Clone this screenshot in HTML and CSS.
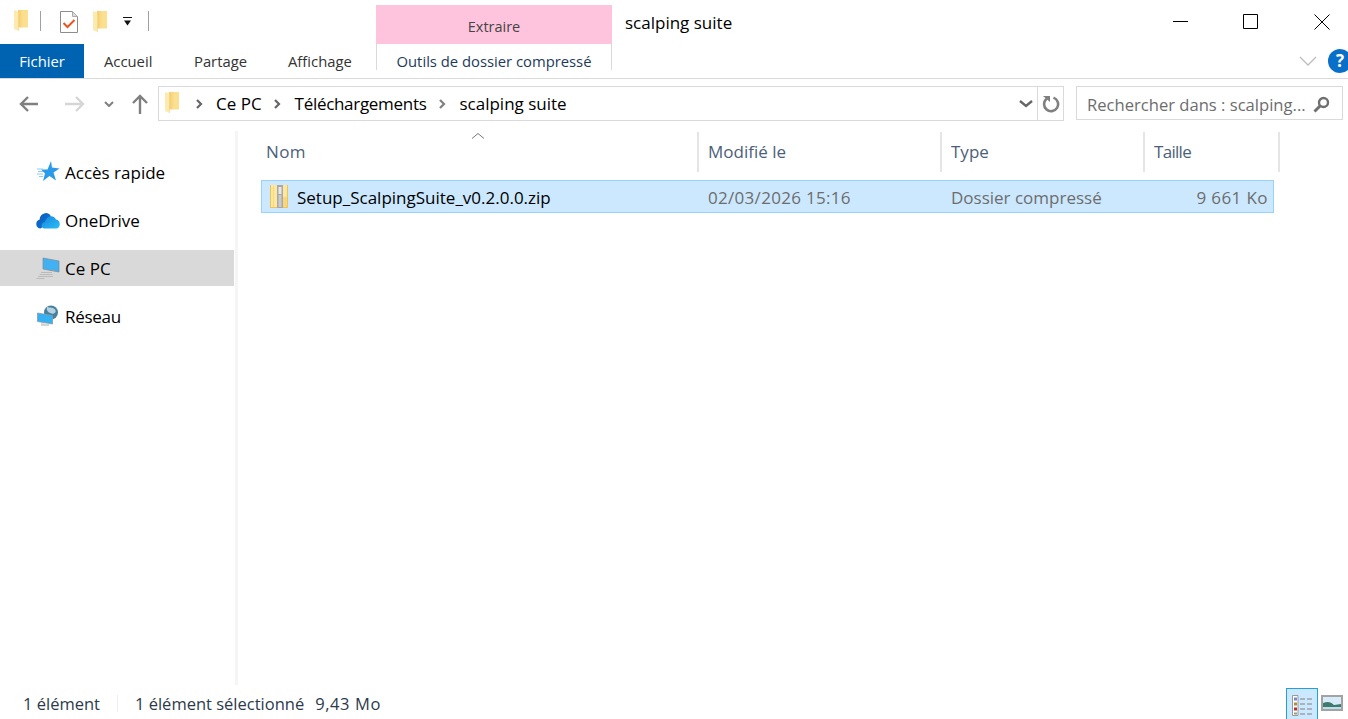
FILE: index.html
```html
<!DOCTYPE html>
<html lang="fr">
<head>
<meta charset="utf-8">
<title>scalping suite</title>
<link rel="stylesheet" href="styles.css">
</head>
<body>
<svg class="defs" width="0" height="0">
  <defs>
    <linearGradient id="fold" x1="0" y1="0" x2="1" y2="0"><stop offset="0" stop-color="#f2cc6c"/><stop offset=".5" stop-color="#fbdf90"/><stop offset="1" stop-color="#fbe08f"/></linearGradient>
    <linearGradient id="odr" x1="0" y1="0" x2="1" y2="1"><stop offset="0" stop-color="#0c59bd"/><stop offset="1" stop-color="#0f78d4"/></linearGradient>
    <linearGradient id="odl" x1="0" y1="0" x2="1" y2="1"><stop offset="0" stop-color="#1484dc"/><stop offset="1" stop-color="#2cc0f6"/></linearGradient>
    <symbol id="folder" viewBox="0 0 14 21">
      <path d="M4 0h10v17.500H4z" fill="url(#fold)"/>
      <path d="M0 0l4.500 1.500V21L0 19z" fill="#fdeab0"/>
      <path d="M4.500 1.500V21" stroke="#f4cf72" stroke-width=".5"/>
    </symbol>
    <symbol id="zip" viewBox="0 0 18 23">
      <path d="M0 0h18v23H0z" fill="#fee79f"/>
      <path d="M0 0h1v23H0zM1 22h17v1H1zM17 0h1v23h-1z" fill="#efc25c"/>
      <path d="M3 1h1v21H3z" fill="#fad87c"/>
      <path d="M13 12h4v10h-4z" fill="#f8d67a"/>
      <path d="M7 0h6v23H7z" fill="#a8a8a8"/>
      <path d="M8.500 2h3v7h-3z" fill="#e8e8e8"/>
      <path d="M8.500 11h3M8.500 13h3M8.500 15h3M8.500 17h3M8.500 19h3M8.500 21h3" stroke="#eee"/>
    </symbol>
  </defs>
</svg>
<div class="window">
  <header class="titlebar">
    <div class="qat">
      <svg class="qi q1" width="14" height="21"><use href="#folder"/></svg>
      <span class="qsep"></span>
      <svg class="qi q2" width="18" height="22" viewBox="0 0 18 22"><path d="M.5.500h12l5 5v16H.5z" fill="#fff" stroke="#8d8d8d"/><path d="M12.500.5v5h5z" fill="#ddd" stroke="#aaa"/><path d="M3.500 12l4 4 7-7" fill="none" stroke="#e9541f" stroke-width="2"/></svg>
      <svg class="qi q3" width="14" height="21"><use href="#folder"/></svg>
      <svg class="qi q4" width="9" height="9" viewBox="0 0 9 9"><path d="M0 .5h9" stroke="#111"/><path d="M1 3.500h7L4.500 8.500z" fill="#111"/></svg>
      <span class="qsep q5"></span>
    </div>
    <div class="context">Extraire</div>
    <div class="wintitle">scalping suite</div>
    <div class="controls">
      <svg width="16" height="16" viewBox="0 0 16 16"><path d="M1 7.500h15" stroke="#000"/></svg>
      <svg width="16" height="16" viewBox="0 0 16 16"><path d="M.5.500h14v14H.5z" fill="none" stroke="#000"/></svg>
      <svg width="16" height="16" viewBox="0 0 16 16"><path d="M.5.500l15 15M15.500.500l-15 15" stroke="#000" fill="none"/></svg>
    </div>
  </header>

  <nav class="ribbon">
    <div class="tab file">Fichier</div>
    <div class="tab t1">Accueil</div>
    <div class="tab t2">Partage</div>
    <div class="tab t3">Affichage</div>
    <div class="tab tools">Outils de dossier compressé</div>
    <div class="ribbon-right">
      <svg width="18" height="10" viewBox="0 0 18 10"><path d="M1 1l8 8 8-8" fill="none" stroke="#bdbdbd" stroke-width="1.300"/></svg>
      <span class="help">?</span>
    </div>
  </nav>

  <div class="addressrow">
    <div class="navbtns">
      <svg width="19" height="16" viewBox="0 0 19 16"><path d="M19 8H2M9 1L2 8l7 7" fill="none" stroke="#808080" stroke-width="2.400"/></svg>
      <svg class="fwd" width="20" height="16" viewBox="0 0 20 16"><path d="M0 8h18M11 1l7 7-7 7" fill="none" stroke="#d6d6d6" stroke-width="2.400"/></svg>
      <svg class="rec" width="10" height="6" viewBox="0 0 10 6"><path d="M1 1l4 4 4-4" fill="none" stroke="#808080" stroke-width="2"/></svg>
      <svg class="up" width="16" height="20" viewBox="0 0 16 20"><path d="M8 20V2M1 9l7-7 7 7" fill="none" stroke="#808080" stroke-width="2.400"/></svg>
    </div>
    <div class="address">
      <svg class="addrfolder" width="14" height="21"><use href="#folder"/></svg>
      <svg class="crumb c0" width="7" height="10" viewBox="0 0 7 10"><path d="M1 1l4 4-4 4" fill="none" stroke="#666" stroke-width="2.200"/></svg>
      <span>Ce PC</span>
      <svg class="crumb c1" width="7" height="10" viewBox="0 0 7 10"><path d="M1 1l4 4-4 4" fill="none" stroke="#666" stroke-width="2.200"/></svg>
      <span class="dl">Téléchargements</span>
      <svg class="crumb c2" width="7" height="10" viewBox="0 0 7 10"><path d="M1 1l4 4-4 4" fill="none" stroke="#808080" stroke-width="2.200"/></svg>
      <span>scalping suite</span>
      <div class="addr-end">
        <svg class="drop" width="14" height="8" viewBox="0 0 14 8"><path d="M1 1l6 5 6-5" fill="none" stroke="#666" stroke-width="2.400"/></svg>
        <span class="refresh"><svg width="18" height="18" viewBox="0 0 18 18"><path d="M11.500 2.600A7 7 0 1 1 5 3.500" fill="none" stroke="#808080" stroke-width="2.600"/><path d="M1 1h7v6z" fill="#808080"/></svg></span>
      </div>
    </div>
    <div class="search">
      <span>Rechercher dans : scalping...</span>
      <svg width="17" height="17" viewBox="0 0 17 17"><circle cx="10.500" cy="6.500" r="4.500" fill="none" stroke="#707070" stroke-width="2.400"/><path d="M7 10l-5.500 5.500" stroke="#707070" stroke-width="3"/></svg>
    </div>
  </div>

  <main class="body">
    <aside class="sidebar">
      <div class="navitem">
        <svg width="24" height="22" viewBox="0 0 24 22"><path d="M15 0l1 6.500 7.500 1-6 4 2.500 8-6.500-4.500-6.500 5 2-7.500-4-4h6.500z" fill="#2b9be8"/><path d="M1 8h6M2 10.500h5M1 13h6M3 15.500h4" stroke="#8ccbf3"/></svg>
        <span>Accès rapide</span>
      </div>
      <div class="navitem">
        <svg width="24" height="17" viewBox="0 0 24 17"><path d="M4.500 16.500a4.500 4.500 0 0 1-1-8.800A7.500 7.500 0 0 1 10 1c2 0 3.500 1 4.500 2.500V10z" fill="url(#odr)"/><path d="M8.500 16.500c-4 0-4-6 .5-6.500 1.500-6 8-8 11-2.500 5 .5 5 9 0 9z" fill="url(#odl)"/></svg>
        <span>OneDrive</span>
      </div>
      <div class="navitem active">
        <svg width="24" height="22" viewBox="0 0 24 22"><path d="M7 1l16 3v11L7 12z" fill="#41b1f2" stroke="#7a8a96" stroke-width=".7"/><path d="M5 15.500h11M3.500 17.500h13M2 19.500h15M.5 21.500h8" stroke="#b4b4b4" stroke-width=".8"/><path d="M14 13.500h5" stroke="#999"/></svg>
        <span>Ce PC</span>
      </div>
      <div class="navitem">
        <svg width="24" height="23" viewBox="0 0 24 23"><circle cx="15" cy="7.500" r="7" fill="#46809f"/><path d="M11 2c3 1 6 0 8 2.500s-1 5-3.500 4-5.500-2-4.500-6.500z" fill="#b6d2e2"/><path d="M1.500 8l15 2.500v8.500l-15-2.500z" fill="#35b0f0" stroke="#8a9aa6" stroke-width=".8"/><path d="M5 18v3h8v-2z" fill="#d5d5d5"/></svg>
        <span class="net">Réseau</span>
      </div>
    </aside>
    <section class="files">
      <svg class="sort" width="14" height="7" viewBox="0 0 14 7"><path d="M1 6.500l6-5 6 5" fill="none" stroke="#777"/></svg>
      <div class="headers">
        <div class="h h-name">Nom</div>
        <div class="h">Modifié le</div>
        <div class="h">Type</div>
        <div class="h size-h">Taille</div>
      </div>
      <div class="row">
        <div class="cell name"><svg width="18" height="23"><use href="#zip"/></svg><span>Setup_ScalpingSuite_v0.2.0.0.zip</span></div>
        <div class="cell date">02/03/2026 15:16</div>
        <div class="cell">Dossier compressé</div>
        <div class="cell size">9 661 Ko</div>
      </div>
    </section>
  </main>

  <footer class="status">
    <span class="s1">1 élément</span>
    <span class="ssep"></span>
    <span class="s2">1 élément sélectionné</span>
    <span class="s3">9,43 Mo</span>
    <div class="views">
      <span class="view on"><svg width="20" height="22" viewBox="0 0 20 22"><path d="M.5.500h5.500v20H.5z" fill="#fff" stroke="#999"/><path d="M2 2.500h3v3H2z" fill="#7c8ac0"/><path d="M2 7.500h3v3H2z" fill="#a89040"/><path d="M2 12.500h3v3H2z" fill="#b83030"/><path d="M2 17.500h3v2H2z" fill="#90a080"/><path d="M8 4h5M15 4h5M8 9h5M15 9h5M8 14h5M15 14h5M8 19h5M15 19h5" stroke="#808080"/></svg></span>
      <svg class="large" width="22" height="16" viewBox="0 0 22 16"><path d="M1 1h20v14H1z" fill="#d7ecf8" stroke="#a3a3a3" stroke-width="2"/><path d="M2 8c5-2 8-1 11 2l7-1v3H10l-8 1z" fill="#3f7a6c"/><path d="M2 12h18v2H2z" fill="#bcdff0"/></svg>
    </div>
  </footer>
</div>
</body>
</html>
```
FILE: styles.css
```css
* { box-sizing: border-box; }
html, body { margin: 0; height: 100%; background: #fff; overflow: hidden; }
body { font-family: "Open Sans", "Noto Sans", "Liberation Sans", sans-serif; font-size: 17px; color: #000; }
.defs { position: absolute; }
.window { width: 1348px; height: 719px; display: flex; flex-direction: column; }

.titlebar { height: 44px; display: flex; align-items: flex-start; flex: none; }
.qat { width: 376px; height: 44px; display: flex; align-items: center; padding: 0 0 1px 14px; }
.qi { flex: none; }
.qsep { width: 1px; height: 20px; background: #a0a0a0; margin: 0 0 2px 12px; }
.q1 { margin-bottom: 2px; }
.q2 { margin-left: 19px; }
.q3 { margin-left: 15px; }
.q4 { margin-left: 16px; }
.q5 { margin-left: 16px; }
.context { width: 236px; height: 39px; margin-top: 5px; background: #fec4de; color: #444; font-size: 14.500px; display: flex; align-items: center; justify-content: center; padding-top: 3px; }
.wintitle { margin-left: 13px; height: 44px; line-height: 46px; }
.controls { margin-left: auto; display: flex; height: 44px; align-items: center; gap: 55px; padding: 0 18px 0 0; }
.controls svg { flex: none; }

.ribbon { height: 35px; flex: none; display: flex; border-bottom: 1px solid #dadada; font-size: 14.800px; color: #333; }
.tab { height: 34px; line-height: 34px; flex: none; }
.file { width: 84px; background: #0063b1; color: #fff; text-align: center; }
.t1 { margin-left: 20px; width: 90px; }
.t2 { width: 94px; }
.t3 { width: 88px; }
.tools { width: 236px; height: 26px; line-height: 34px; border: 1px solid #dadada; border-width: 0 1px; color: #1c3a5c; text-align: center; }
.ribbon-right { margin-left: auto; display: flex; align-items: center; gap: 11px; height: 34px; margin-right: -4px; }
.help { width: 24px; height: 24px; border-radius: 50%; background: #0a6fc8; color: #fff; font-weight: 700; font-size: 17px; line-height: 24px; text-align: center; }

.addressrow { height: 52px; flex: none; display: flex; align-items: flex-start; padding: 7px 5px 0 0; }
.navbtns { width: 158px; height: 35px; display: flex; align-items: center; padding-left: 19px; flex: none; }
.fwd { margin-left: 27px; }
.rec { margin-left: 19px; }
.up { margin-left: 18px; }
.address { width: 906px; height: 35px; border: 1px solid #dadada; display: flex; align-items: center; flex: none; }
.address span { flex: none; }
.addrfolder { margin: 0 0 3px 6px; flex: none; }
.crumb { margin: 0 13px 0 12px; flex: none; }
.crumb.c0 { margin: 0 13px 0 17px; }
.crumb.c1 { margin-right: 14px; }
.crumb.c2 { margin-left: 13px; }
.dl { letter-spacing: -.3px; }
.addr-end { margin-left: auto; display: flex; align-items: center; height: 33px; }
.drop { margin-right: 4px; }
.refresh { width: 26px; height: 33px; border-left: 1px solid #dadada; display: flex; align-items: center; justify-content: center; }
.search { width: 267px; height: 34px; margin-left: 12px; border: 1px solid #dadada; display: flex; align-items: center; justify-content: space-between; padding: 2px 12px 0 10px; color: #6d6d6d; flex: none; font-size: 16.600px; }
.search svg { flex: none; }

.body { flex: 1; display: flex; min-height: 0; }
.sidebar { width: 238px; flex: none; border-right: 3px solid #f5f5f5; padding-top: 23px; margin-bottom: 3px; }
.navitem { width: 234px; height: 36px; margin-bottom: 12px; display: flex; align-items: center; gap: 5px; padding-left: 36px; }
.navitem svg { flex: none; }
.net { letter-spacing: -.3px; }
.active { background: #d9d9d9; }

.files { flex: 1; position: relative; min-width: 0; }
.sort { position: absolute; left: 233px; top: 1px; }
.headers { height: 39px; margin-top: 1px; display: grid; grid-template-columns: 461px 243px 203px 135px; }
.h { border-right: 2px solid #e5e5e5; padding-left: 28px; line-height: 40px; color: #4c607a; }
.h:not(:first-child) { padding-left: 9px; }
.h-name { letter-spacing: .4px; }
.size-h { letter-spacing: -.7px; }
.row { margin: 9px 0 0 23px; width: 1013px; height: 33px; background: #cce8ff; border: 1px solid #99d1ff; display: grid; grid-template-columns: 437px 243px 202px 129px; align-items: center; color: #6d6d6d; }
.cell { padding: 1px 0 0 9px; white-space: nowrap; }
.name { padding-left: 8px; color: #000; display: flex; align-items: center; gap: 9px; }
.name svg { flex: none; margin-top: -1px; }
.date { letter-spacing: .3px; }
.size { text-align: right; padding: 1px 5px 0 0; letter-spacing: .4px; }

.status { height: 31px; flex: none; display: flex; align-items: center; color: #2b3a4c; padding-left: 23px; font-size: 16.500px; }
.ssep { width: 1px; height: 17px; margin: 0 17px; background: #eeeeee; }
.s3 { margin-left: 11px; letter-spacing: .6px; }
.views { margin-left: auto; display: flex; align-items: flex-end; height: 31px; margin-right: 5px; gap: 3px; }
.view { width: 32px; height: 34px; margin-bottom: -3px; background: #cce8ff; border: 1px solid #26a0da; border-bottom: 0; display: flex; justify-content: center; align-items: flex-start; padding-top: 6px; }
.large { margin-bottom: 8px; }
```
